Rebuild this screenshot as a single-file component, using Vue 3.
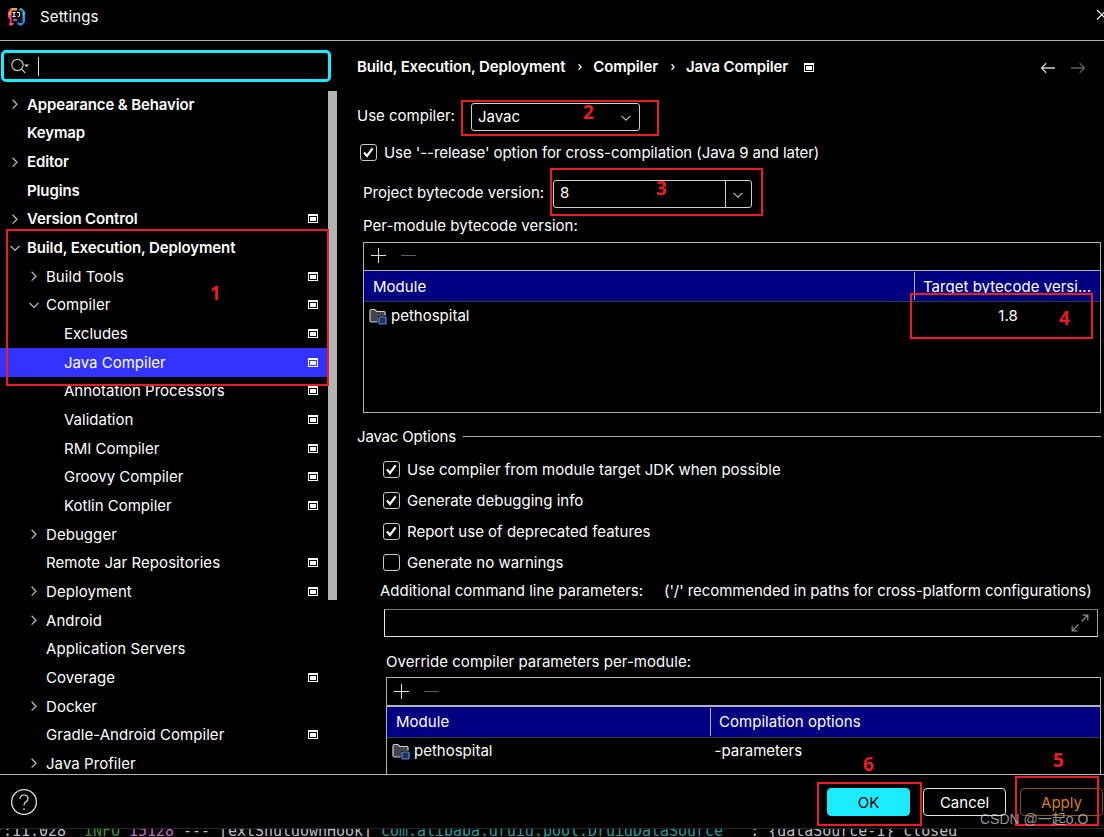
<template>
  <div class="window">
    <header class="titlebar">
      <svg class="logo" width="20" height="20" viewBox="0 0 20 20">
        <polygon points="1,5 4,1 10,1 12,9 7,16 5,19 2,18 3,13 1,10" fill="#ff3d7f" />
        <polygon points="3,4 5,1 10,1 9,5 4,8 1,8" fill="#fca43c" />
        <polygon points="12,3 14,1 18,5 18,15 14,19 10,17 12,14" fill="#149bf5" />
        <polygon points="12,3 14,1 18,5 16.5,10" fill="#25d5f5" />
        <rect x="4.5" y="3.5" width="11" height="12.5" fill="#130b16" />
        <path d="M5.5 5.500h3M7 5.500v4M5.500 9.500h3M10 5.500h2.500v3.200q0 1-1.600 .8" stroke="#fff" stroke-width="1" fill="none" />
        <path d="M6 13h4" stroke="#ddd" stroke-width="1" />
      </svg>
      <span class="title">Settings</span>
      <svg class="close" width="12" height="12" viewBox="0 0 12 12">
        <path d="M1 1l9.5 9.5M10.5 1L1 10.5" stroke="#fff" stroke-width="1.1" />
      </svg>
    </header>

    <div class="body">
      <aside class="sidebar">
        <div class="search">
          <svg width="22" height="18" viewBox="0 0 22 18" fill="none" stroke="#c4c4c4" stroke-width="1.2">
            <circle cx="7.5" cy="8" r="5.6" />
            <path d="M11.5 12.2l3.7 3.8" />
            <path d="M14 7.5h5.200l-2.600 2.800z" fill="#d0d0d0" stroke="none" />
          </svg>
          <span class="caret"></span>
        </div>
        <ul class="tree">
          <li
            v-for="item in tree"
            :key="item.label"
            class="node"
            :class="['level-' + item.level, { selected: item.selected }]"
          >
            <svg class="arrow" width="12" height="12" viewBox="0 0 12 12">
              <path v-if="item.state === 'closed'" d="M3.6 1.8L8 6.2L3.6 10.6" />
              <path v-if="item.state === 'open'" d="M1.6 4L6 8.4L10.4 4" />
            </svg>
            <span class="label">{{ item.label }}</span>
            <span v-if="item.project" class="project-mark"></span>
          </li>
        </ul>
        <div class="scrollbar"></div>
      </aside>

      <main class="content">
        <div class="breadcrumb">
          <span class="crumb">Build, Execution, Deployment</span>
          <svg class="sep" width="6" height="8" viewBox="0 0 6 8"><path d="M1.6 1.2L4 4L1.6 6.8" /></svg>
          <span class="crumb">Compiler</span>
          <svg class="sep" width="6" height="8" viewBox="0 0 6 8"><path d="M1.6 1.2L4 4L1.6 6.8" /></svg>
          <span class="crumb">Java Compiler</span>
          <span class="project-mark"></span>
          <div class="history">
            <svg width="16" height="12" viewBox="0 0 16 12"><path d="M15 6H1.6M6.2 1.2L1.5 6l4.7 4.8" stroke="#ced0d6" /></svg>
            <svg width="16" height="12" viewBox="0 0 16 12"><path d="M1 6h13.4M9.8 1.2L14.5 6l-4.7 4.8" stroke="#5a5d63" /></svg>
          </div>
        </div>

        <div class="compiler-row">
          <span class="use-compiler">Use compiler:</span>
          <div class="combo">
            <span>Javac</span>
            <svg class="chevron" width="12" height="8" viewBox="0 0 12 8"><path d="M1.6 1.8L6 6.2L10.4 1.8" /></svg>
          </div>
        </div>

        <div class="check-row release">
          <span class="checkbox"><svg width="17" height="17" viewBox="0 0 17 17"><path d="M4 8.6L7 12L12.6 4.4" /></svg></span>
          <span class="release-text">Use '--release' option for cross-compilation (Java 9 and later)</span>
        </div>

        <div class="bytecode-row">
          <span class="bytecode-label">Project bytecode version:</span>
          <div class="editable-combo">
            <span class="value">8</span>
            <span class="drop">
              <svg class="chevron" width="12" height="8" viewBox="0 0 12 8"><path d="M1.6 1.8L6 6.2L10.4 1.8" /></svg>
            </span>
          </div>
        </div>

        <div class="per-module"><span>Per-module bytecode version:</span></div>

        <section class="table versions">
          <div class="toolbar">
            <svg width="48" height="16" viewBox="0 0 48 16">
              <path d="M0 8.5h15M7.5 1v15" stroke="#dfe1e5" />
              <path d="M30 8.5h15" stroke="#5a5d63" />
            </svg>
          </div>
          <div class="thead">
            <span class="th"><span>Module</span></span>
            <span class="th last"><span>Target bytecode versi...</span></span>
          </div>
          <div class="tr">
            <svg class="folder" width="18" height="17" viewBox="0 0 18 17">
              <path d="M1 3q0-1.5 1.5-1.5h3.2l2 2H15q1 0 1 1V8h-7v6H2.5Q1 14 1 12.5z" fill="#43454a" stroke="#ced0d6" stroke-width="1.2" />
              <rect x="8.5" y="7.5" width="9.5" height="9.5" fill="#000" />
              <rect x="10" y="9" width="7" height="7" rx="1" fill="#25324d" stroke="#548af7" stroke-width="1.2" />
            </svg>
            <span class="name">pethospital</span>
            <span class="target">1.8</span>
          </div>
        </section>

        <div class="section-title"><span>Javac Options</span></div>

        <div v-for="option in options" :key="option.label" class="check-row option">
          <span class="checkbox">
            <svg v-if="option.checked" width="17" height="17" viewBox="0 0 17 17"><path d="M4 8.6L7 12L12.6 4.4" /></svg>
          </span>
          <span>{{ option.label }}</span>
        </div>

        <div class="params-label">
          <span class="params-name">Additional command line parameters:</span>
          <span class="params-hint">('/' recommended in paths for cross-platform configurations)</span>
        </div>
        <div class="params-input">
          <svg width="18" height="18" viewBox="0 0 18 18">
            <path d="M10.5 7.5L16.5 1.5M11.5 1.2h5.3v5.3M7.5 10.5L1.5 16.5M1.2 11.5v5.3h5.3" />
          </svg>
        </div>

        <div class="override-label"><span>Override compiler parameters per-module:</span></div>

        <section class="table overrides">
          <div class="toolbar">
            <svg width="48" height="16" viewBox="0 0 48 16">
              <path d="M0 8.5h15M7.5 1v15" stroke="#dfe1e5" />
              <path d="M30 8.5h15" stroke="#5a5d63" />
            </svg>
          </div>
          <div class="thead">
            <span class="th"><span>Module</span></span>
            <span class="th last"><span>Compilation options</span></span>
          </div>
          <div class="tr">
            <svg class="folder" width="18" height="17" viewBox="0 0 18 17">
              <path d="M1 3q0-1.5 1.5-1.5h3.2l2 2H15q1 0 1 1V8h-7v6H2.5Q1 14 1 12.5z" fill="#43454a" stroke="#ced0d6" stroke-width="1.2" />
              <rect x="8.5" y="7.5" width="9.5" height="9.5" fill="#000" />
              <rect x="10" y="9" width="7" height="7" rx="1" fill="#25324d" stroke="#548af7" stroke-width="1.2" />
            </svg>
            <span class="name">pethospital</span>
            <span class="flags">-parameters</span>
          </div>
        </section>
      </main>
    </div>

    <footer class="footer">
      <svg class="help" width="28" height="28" viewBox="0 0 28 28" fill="none" stroke="#dfe1e5">
        <circle cx="14" cy="14" r="12.4" stroke-width="1.3" />
        <path d="M10 11q0-4 4-4t4 3.6q0 2-2 3.2t-2 3.2v.6" stroke-width="1.2" />
        <path d="M13.2 21.2h1.6" stroke-width="1.5" />
      </svg>
      <button class="btn ok">OK</button>
      <button class="btn cancel">Cancel</button>
      <button class="btn apply">Apply</button>
    </footer>

    <div class="console">
      <pre>7:11.028  <span class="info">INFO</span> <span class="pid">15128</span> --- [extShutdownHook] <span class="logger">com.alibaba.druid.pool.DruidDataSource</span>   : {dataSource-1} closed</pre>
    </div>

    <!-- step markers over the dialog -->
    <div v-for="mark in marks" :key="mark.n" class="mark" :style="boxStyle(mark)">
      <span class="mark-number" :style="{ left: mark.nx - mark.x + 'px', top: mark.ny - mark.y + 'px' }">{{ mark.n }}</span>
    </div>
    <div class="watermark">CSDN @一起o.O</div>
  </div>
</template>

<script setup>
const tree = [
  { label: 'Appearance & Behavior', level: 0, state: 'closed' },
  { label: 'Keymap', level: 0 },
  { label: 'Editor', level: 0, state: 'closed' },
  { label: 'Plugins', level: 0 },
  { label: 'Version Control', level: 0, state: 'closed', project: true },
  { label: 'Build, Execution, Deployment', level: 0, state: 'open' },
  { label: 'Build Tools', level: 1, state: 'closed', project: true },
  { label: 'Compiler', level: 1, state: 'open', project: true },
  { label: 'Excludes', level: 2, project: true },
  { label: 'Java Compiler', level: 2, project: true, selected: true },
  { label: 'Annotation Processors', level: 2, project: true },
  { label: 'Validation', level: 2, project: true },
  { label: 'RMI Compiler', level: 2, project: true },
  { label: 'Groovy Compiler', level: 2, project: true },
  { label: 'Kotlin Compiler', level: 2, project: true },
  { label: 'Debugger', level: 1, state: 'closed' },
  { label: 'Remote Jar Repositories', level: 1, project: true },
  { label: 'Deployment', level: 1, state: 'closed', project: true },
  { label: 'Android', level: 1, state: 'closed' },
  { label: 'Application Servers', level: 1 },
  { label: 'Coverage', level: 1, project: true },
  { label: 'Docker', level: 1, state: 'closed' },
  { label: 'Gradle-Android Compiler', level: 1, project: true },
  { label: 'Java Profiler', level: 1, state: 'closed' }
]

const options = [
  { label: 'Use compiler from module target JDK when possible', checked: true },
  { label: 'Generate debugging info', checked: true },
  { label: 'Report use of deprecated features', checked: true },
  { label: 'Generate no warnings', checked: false }
]

// x/y/w/h frame the control, nx/ny is the centre of the number
const marks = [
  { n: 1, x: 6, y: 229, w: 323, h: 157, nx: 215.5, ny: 293 },
  { n: 2, x: 461, y: 100, w: 198, h: 36, nx: 588.5, ny: 112 },
  { n: 3, x: 550, y: 168, w: 213, h: 48, nx: 661.5, ny: 188 },
  { n: 4, x: 910, y: 293, w: 183, h: 46, nx: 1064.5, ny: 318 },
  { n: 5, x: 1015, y: 776, w: 84, h: 50, nx: 1058.5, ny: 760 },
  { n: 6, x: 817, y: 782, w: 105, h: 44, nx: 868.5, ny: 764 }
]

const boxStyle = (mark) => ({
  left: mark.x + 'px',
  top: mark.y + 'px',
  width: mark.w + 'px',
  height: mark.h + 'px'
})
</script>

<style>
body {
  background: #000;
  overflow: hidden;
}
</style>

<style scoped>
* {
  box-sizing: border-box;
}

.window {
  position: relative;
  display: flex;
  flex-direction: column;
  width: 1104px;
  height: 837px;
  overflow: hidden;
  background: #000;
  color: #fff;
  font-family: Inter, "Liberation Sans", sans-serif;
  font-size: 15px;
  line-height: 20px;
  white-space: nowrap;
}

.titlebar {
  display: flex;
  align-items: center;
  height: 41px;
  padding: 0 0 7px 7px;
  border-bottom: 1px solid #b3b3b3;
}

.title {
  margin-left: 13px;
  letter-spacing: 0.15px;
}

.close {
  flex-shrink: 0;
  margin: 0 -4px 4px auto;
}

.body {
  display: flex;
  height: 734px;
  border-bottom: 1px solid #b3b3b3;
  overflow: hidden;
}

/* sidebar */
.sidebar {
  position: relative;
  width: 337px;
  flex-shrink: 0;
}

.search {
  display: flex;
  align-items: center;
  width: 330px;
  height: 32px;
  margin: 9px 0 8px 1px;
  padding-left: 6px;
  border: 3px solid #1aebff;
  border-radius: 5px;
}

.caret {
  width: 1px;
  height: 19px;
  margin-left: 6px;
  background: #ddd;
}

.tree {
  margin: 0;
  padding: 0;
  list-style: none;
}

.node {
  display: flex;
  align-items: center;
  width: 328px;
  height: 28.67px;
  padding-right: 10px;
  letter-spacing: 0.06px;
}

.node.level-0 {
  padding-left: 9px;
  font-weight: 600;
  letter-spacing: -0.13px;
}

.node.level-1 {
  padding-left: 28px;
}

.node.level-2 {
  padding-left: 46px;
  letter-spacing: 0;
}

.node.selected {
  background: #3333ff;
}

.arrow {
  flex-shrink: 0;
  margin-right: 6px;
  fill: none;
  stroke: #b4b8bf;
  stroke-width: 1.3;
}

.label {
  flex: 1;
  margin-top: 1px;
}

.project-mark {
  width: 10px;
  height: 9px;
  flex-shrink: 0;
  border: 1px solid #fff;
  border-top-width: 2px;
  background: #fff;
  box-shadow: inset 0 0 0 1px #000;
}

.selected .project-mark {
  box-shadow: inset 0 0 0 1px #3333ff;
}

.scrollbar {
  position: absolute;
  top: 50px;
  right: 0;
  width: 9px;
  height: 509px;
  background: #b3b3b3;
}

/* content */
.content {
  flex: 1;
  min-width: 0;
}

.breadcrumb {
  display: flex;
  align-items: center;
  height: 52px;
  padding-left: 20px;
  font-weight: 600;
  letter-spacing: -0.13px;
}

.sep {
  margin: 0 10px 0 12px;
  fill: none;
  stroke: #fff;
  stroke-width: 1.3;
}

.breadcrumb .project-mark {
  margin: 1px 0 0 16px;
}

.history {
  display: flex;
  gap: 14px;
  margin: 2px 18px 0 auto;
}

.history path {
  fill: none;
  stroke-width: 1.3;
}

.compiler-row {
  display: flex;
  align-items: center;
  height: 48px;
  padding-left: 20px;
}

.use-compiler {
  width: 114px;
  margin-top: -2px;
}

.combo {
  display: flex;
  align-items: center;
  justify-content: space-between;
  width: 169px;
  height: 28px;
  padding: 0 7px 0 6px;
  border: 1px solid #d0d0d0;
  border-radius: 3px;
}

.chevron {
  margin-top: 2px;
  fill: none;
  stroke: #b4b8bf;
  stroke-width: 1.2;
}

.check-row {
  display: flex;
  align-items: center;
}

.checkbox {
  width: 17px;
  height: 17px;
  margin-right: 7px;
  border: 1px solid #c8c8c8;
  border-radius: 3px;
}

.checkbox svg {
  display: block;
  margin: -1px;
}

.checkbox path {
  fill: none;
  stroke: #fff;
  stroke-width: 2.2;
}

.release {
  height: 23px;
  padding-left: 23px;
}

.release-text {
  letter-spacing: -0.065px;
}

.bytecode-row {
  display: flex;
  align-items: center;
  height: 41px;
  margin-top: 9px;
  padding-left: 26px;
}

.bytecode-label {
  width: 190px;
  margin-top: -1px;
}

.editable-combo {
  display: flex;
  width: 199px;
  height: 28px;
  border: 1px solid #d0d0d0;
  border-radius: 3px;
}

.value {
  flex: 1;
  padding: 2px 6px;
}

.drop {
  display: flex;
  align-items: center;
  justify-content: center;
  width: 26px;
  padding-right: 1px;
  border-left: 1px solid #d0d0d0;
}

.per-module {
  height: 28px;
  padding: 2px 0 0 26px;
  letter-spacing: 0.03px;
}

.table {
  border: 1px solid #b3b3b3;
}

.versions {
  width: 738px;
  height: 171px;
  margin-left: 26px;
}

.toolbar {
  height: 28px;
  padding: 4px 0 0 7px;
  border-bottom: 1px solid #b3b3b3;
}

.toolbar svg {
  display: block;
}

.thead {
  display: flex;
  align-items: center;
  height: 31px;
  border-bottom: 1px solid #3c3c3c;
  background: #000080;
}

.th {
  display: flex;
  align-items: center;
  height: 28px;
  padding-left: 9px;
  border-right: 1px solid #b3b3b3;
  letter-spacing: 0.03px;
}

.versions .th span {
  margin-top: 1px;
}

.th.last {
  flex: 1;
  padding-left: 8px;
  border-right: none;
}

.versions .th:first-child {
  width: 551px;
}

.tr {
  display: flex;
  align-items: center;
  height: 28px;
}

.folder {
  margin-left: 5px;
}

.name {
  margin-left: 4px;
}

.target {
  width: 184px;
  margin-left: auto;
  text-align: center;
}

.section-title {
  display: flex;
  align-items: center;
  height: 26px;
  margin: 11px 3px 4px 20px;
}

.section-title span {
  width: 99px;
  letter-spacing: -0.18px;
}

.section-title::after {
  content: "";
  flex: 1;
  height: 1px;
  margin: -1px 0 0 7px;
  background: #b3b3b3;
}

.option {
  height: 31px;
  padding-left: 46px;
}

.params-label {
  display: flex;
  align-items: center;
  height: 26px;
  padding-left: 43px;
}

.params-name {
  width: 284px;
  letter-spacing: -0.02px;
}

.params-hint {
  letter-spacing: -0.07px;
}

.params-input {
  display: flex;
  align-items: center;
  justify-content: flex-end;
  width: 714px;
  height: 28px;
  margin: 5px 0 12px 47px;
  padding-right: 8px;
  border: 1px solid #e6e6e6;
  border-top-color: #7a7a7a;
  border-right: 1px solid #a0a0a0;
}

.params-input path {
  fill: none;
  stroke: #868a91;
  stroke-width: 1.2;
}

.override-label {
  height: 28px;
  padding: 3px 0 0 49px;
  letter-spacing: 0.04px;
}

.overrides {
  width: 715px;
  height: 120px;
  margin-left: 49px;
}

.overrides .toolbar {
  height: 29px;
  padding-top: 5px;
  border-bottom-width: 2px;
}

.overrides .th:first-child {
  width: 324px;
}

.overrides .tr {
  height: 26px;
}

.flags {
  margin-left: 222px;
}

/* footer */
.footer {
  display: flex;
  align-items: flex-start;
  height: 54px;
  padding: 13px 0 0 10px;
  border-bottom: 1px solid #262626;
}

.btn {
  flex-shrink: 0;
  width: 83px;
  height: 28px;
  padding: 2px 0 0;
  border: 1px solid #e6e6e6;
  border-radius: 4px;
  background: #000;
  color: #fff;
  font: inherit;
}

.ok {
  margin: 0 13px 0 auto;
  border-color: #1aebff;
  background: #1aebff;
  color: #000;
}

.cancel {
  margin-right: 14px;
}

.apply {
  margin-right: 1px;
  border-color: #8a5310;
  color: #d67f16;
}

.console {
  flex: 1;
  overflow: hidden;
}

.console pre {
  margin: -7px 0 0 -6px;
  font-family: "DejaVu Sans Mono", monospace;
  font-size: 15px;
  line-height: 18px;
  letter-spacing: -0.03px;
  color: #bcbec4;
}

.info {
  color: #3f8f2f;
}

.pid {
  color: #c964c9;
}

.logger {
  color: #1f9e9e;
}

.mark {
  position: absolute;
  border: 2px solid #ed1c24;
}

.mark-number {
  position: absolute;
  transform: translate(-50%, -50%);
  margin: -2px 0 0 -2px;
  color: #ed1c24;
  font-family: "Noto Sans", sans-serif;
  font-size: 19px;
  font-weight: 700;
}

.watermark {
  position: absolute;
  top: 809px;
  left: 980px;
  color: rgba(200, 200, 200, 0.75);
  font-family: "Liberation Sans", "Noto Sans CJK SC", sans-serif;
  font-size: 14px;
}
</style>
